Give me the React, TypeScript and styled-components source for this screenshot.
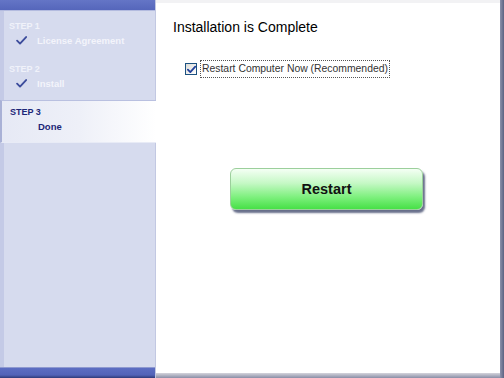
import * as React from 'react';
import styled, { createGlobalStyle } from 'styled-components';

const GlobalStyle = createGlobalStyle`
  html, body {
    margin: 0;
    padding: 0;
    width: 504px;
    height: 378px;
    overflow: hidden;
    background: #ffffff;
  }
  * {
    box-sizing: border-box;
  }
`;

interface IStep {
  label: string;
  title: string;
  done: boolean;
  active: boolean;
}

const steps: IStep[] = [
  {label: 'STEP 1', title: 'License Agreement', done: true, active: false},
  {label: 'STEP 2', title: 'Install', done: true, active: false},
  {label: 'STEP 3', title: 'Done', done: false, active: true},
];

const CheckMark: React.FC<{color: string; size: number; weight: number}> = ({color, size, weight}) => (
  <svg width={size} height={size} viewBox='0 0 12 12'>
    <path d='M1.2 6.2 L4.4 9.4 L11 2.2' stroke={color} strokeWidth={weight} fill='none' strokeLinecap='round' strokeLinejoin='round' />
  </svg>
);

export default function App() {
  const [restart, setRestart] = React.useState(true);

  return (
    <>
      <GlobalStyle />
      <WindowStyled>
        <SidebarStyled>
          <SideTopBarStyled />
          <StepListStyled>
            {steps.map(step => (
              <StepStyled key={step.label} active={step.active}>
                <StepLabelStyled active={step.active}>{step.label}</StepLabelStyled>
                <StepTitleRowStyled>
                  <StepIconStyled>
                    {step.done && <CheckMark color='#3c4c9c' size={11} weight={2} />}
                  </StepIconStyled>
                  <StepTitleStyled active={step.active}>{step.title}</StepTitleStyled>
                </StepTitleRowStyled>
              </StepStyled>
            ))}
          </StepListStyled>
          <SideBottomBarStyled />
        </SidebarStyled>
        <MainStyled>
          <ContentStyled>
            <TitleStyled>Installation is Complete</TitleStyled>
            <CheckRowStyled onClick={() => setRestart(!restart)}>
              <CheckBoxStyled>
                {restart && <CheckMark color='#21409a' size={9} weight={2.4} />}
              </CheckBoxStyled>
              <CheckLabelStyled>Restart Computer Now (Recommended)</CheckLabelStyled>
            </CheckRowStyled>
            <ButtonRowStyled>
              <RestartButtonStyled>Restart</RestartButtonStyled>
            </ButtonRowStyled>
          </ContentStyled>
          <MainBottomStyled />
        </MainStyled>
        <RightEdgeStyled />
      </WindowStyled>
    </>
  );
}

const WindowStyled = styled.div`
  display: flex;
  width: 504px;
  height: 378px;
  font-family: 'Liberation Sans', Arial, sans-serif;
`;

const SidebarStyled = styled.div`
  width: 156px;
  display: flex;
  flex-direction: column;
  background: #d6dbee;
  border-left: 4px solid #c4cae6;
  border-right: 1px solid #c2c8e2;
`;

const SideTopBarStyled = styled.div`
  height: 11px;
  margin-left: -4px;
  background: linear-gradient(180deg, #6475c6 0%, #5566bb 100%);
  border-bottom: 1px solid #b3bbdf;
`;

const StepListStyled = styled.div`
  flex: 1;
  display: flex;
  flex-direction: column;
  padding-top: 3px;
`;

const StepStyled = styled.div<{active: boolean}>`
  display: flex;
  flex-direction: column;
  height: 43px;
  padding-top: ${p => p.active ? '6px' : '7px'};
  padding-left: ${p => p.active ? '8px' : '5px'};
  margin-left: ${p => p.active ? '-4px' : '0'};
  margin-right: ${p => p.active ? '-1px' : '0'};
  background: ${p => p.active
    ? 'linear-gradient(90deg, #e6e9f5 0%, #eef0f8 50%, #ffffff 100%)'
    : 'transparent'};
  border-top: ${p => p.active ? '1px solid #b9c0e0' : 'none'};
  border-left: ${p => p.active ? '2px solid #a9b1d6' : 'none'};
  border-bottom: ${p => p.active ? '1px solid #e8ebf6' : 'none'};
`;

const StepLabelStyled = styled.div<{active: boolean}>`
  font-size: 9px;
  font-weight: bold;
  color: ${p => p.active ? '#1c2678' : '#f0f2fa'};
  line-height: 11px;
`;

const StepTitleRowStyled = styled.div`
  display: flex;
  align-items: center;
  margin-top: 2px;
  height: 13px;
`;

const StepIconStyled = styled.div`
  width: 28px;
  padding-left: 7px;
  display: flex;
  align-items: center;
`;

const StepTitleStyled = styled.div<{active: boolean}>`
  font-size: 9.5px;
  font-weight: bold;
  color: ${p => p.active ? '#1c2678' : '#f3f4fb'};
`;

const SideBottomBarStyled = styled.div`
  height: 11px;
  margin-left: -4px;
  background: linear-gradient(180deg, #5c6dc2 0%, #5263b8 70%, #2e3a78 100%);
  border-top: 1px solid #8e99d0;
`;

const MainStyled = styled.div`
  flex: 1;
  display: flex;
  flex-direction: column;
  background: #ffffff;
  border-top: 3px solid #f2f2f4;
`;

const ContentStyled = styled.div`
  flex: 1;
  padding: 15px 0 0 17px;
  display: flex;
  flex-direction: column;
`;

const TitleStyled = styled.div`
  font-size: 14px;
  color: #000000;
  line-height: 18px;
`;

const CheckRowStyled = styled.div`
  display: flex;
  align-items: center;
  margin-top: 24px;
  margin-left: 12px;
  cursor: pointer;
`;

const CheckBoxStyled = styled.div`
  width: 12px;
  height: 12px;
  border: 1px solid #1c5180;
  background: linear-gradient(135deg, #dcdcd7 0%, #ffffff 100%);
  display: flex;
  align-items: center;
  justify-content: center;
`;

const CheckLabelStyled = styled.div`
  margin-left: 3px;
  padding: 1px 1px 2px 1px;
  border: 1px dotted #555555;
  font-size: 10.4px;
  color: #333333;
  line-height: 13px;
`;

const ButtonRowStyled = styled.div`
  display: flex;
  margin-top: 90px;
  padding-left: 57px;
`;

const RestartButtonStyled = styled.button`
  width: 193px;
  height: 42px;
  border-radius: 6px;
  border: 1px solid #9ccf9c;
  background: linear-gradient(180deg, #f4fff4 0%, #c6f8c6 35%, #7ef07e 70%, #47e047 100%);
  box-shadow: 2px 3px 2px rgba(40, 50, 90, 0.7);
  font-family: 'Liberation Sans', Arial, sans-serif;
  font-size: 14.5px;
  font-weight: bold;
  color: #111111;
  cursor: pointer;
`;

const MainBottomStyled = styled.div`
  height: 5px;
  background: linear-gradient(180deg, #d4d4dc 0%, #8a8ea6 100%);
`;

const RightEdgeStyled = styled.div`
  width: 4px;
  background: linear-gradient(90deg, #8d92ac 0%, #5c6282 100%);
`;
